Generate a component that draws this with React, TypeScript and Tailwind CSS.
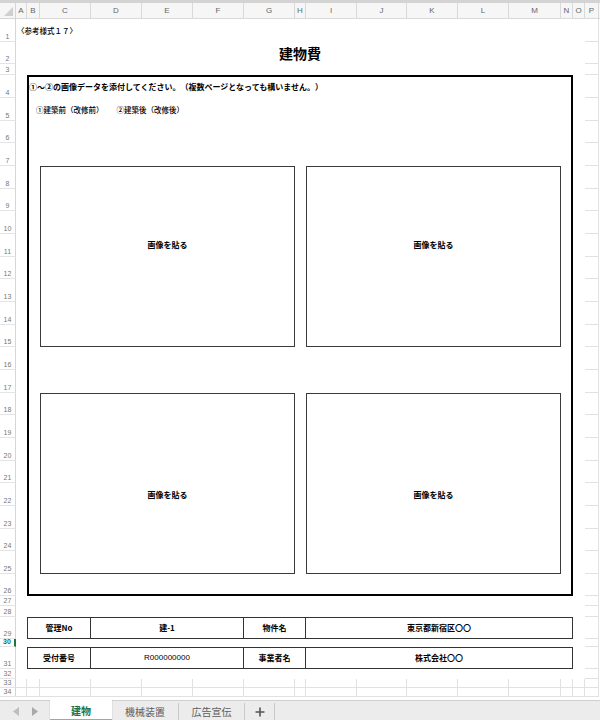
import React from "react";

const COLS = ["A", "B", "C", "D", "E", "F", "G", "H", "I", "J", "K", "L", "M", "N", "O", "P"];
const ROWS = Array.from({ length: 34 }, (_, i) => i + 1);
const ACTIVE_ROW = 30;

function Triangle({ dir, color }: { dir: "left" | "right"; color: string }) {
  return (
    <svg width="6" height="9" viewBox="0 0 6 9">
      {dir === "left" ? (
        <polygon points="6,0 6,9 0,4.5" fill={color} />
      ) : (
        <polygon points="0,0 0,9 6,4.5" fill={color} />
      )}
    </svg>
  );
}

function TabBar() {
  return (
    <div className="h-[23px] shrink-0 bg-[#ececec] border-t border-b border-[#cfcfcf] border-b-[#bdbdbd] flex items-stretch text-[10px]">
      <div className="w-[50px] flex items-center pl-[13px] gap-[13px]">
        <Triangle dir="left" color="#bdbdbd" />
        <Triangle dir="right" color="#a9a9a9" />
      </div>
      <div className="w-[62px] h-[19px] -mt-px self-start bg-white flex items-center justify-center pt-[2px] font-bold text-[#217346] shadow-[0_1px_1px_rgba(0,0,0,0.3)]">
        建物
      </div>
      <div className="w-[67px] h-[17px] self-center border-r border-[#c9c9c9] flex items-center justify-center text-[#5d5d5d]">
        機械装置
      </div>
      <div className="w-[66px] h-[17px] self-center border-r border-[#c9c9c9] flex items-center justify-center text-[#5d5d5d]">
        広告宣伝
      </div>
      <div className="w-[30px] h-[17px] self-center border-r border-[#c9c9c9] flex items-center justify-center">
        <svg width="10" height="10" viewBox="0 0 10 10">
          <path d="M5 0.5V9.5M0.5 5H9.5" stroke="#555" strokeWidth="1.6" />
        </svg>
      </div>
    </div>
  );
}

export default function App() {
  return (
    <div className="w-[600px] h-[720px] overflow-hidden bg-white flex flex-col font-['Noto_Sans_CJK_JP',sans-serif] text-black">
      <div className="h-[3px] shrink-0 bg-[#d3d3d3]" />
      <div className="h-[697px] shrink-0 overflow-hidden grid grid-cols-[16px_11px_13px_51px_51px_51px_51px_51px_11px_51px_50px_51px_51px_52px_12px_12px_14px_1fr] grid-rows-[16px_23px_22px_11px_23px_23px_22px_23px_repeat(18,22.667px)_22px_10px_11px_22px_8px_22px_10px_9px_9px]">
        {/* corner */}
        <div className="col-start-1 row-start-1 bg-[#f6f6f6] border-r border-b border-[#d6d6d6] flex items-end justify-end p-[2px]">
          <svg width="9" height="9" viewBox="0 0 9 9">
            <polygon points="9,0 9,9 0,9" fill="#cfcfcf" />
          </svg>
        </div>

        {/* column headers */}
        {COLS.map((c, i) => (
          <div
            key={c}
            style={{ gridColumn: i + 2, gridRow: 1 }}
            className="bg-[#f6f6f6] border-r border-b border-[#d9d9d9] flex items-center justify-center text-[8px] text-[#666] font-['Liberation_Sans',sans-serif]"
          >
            {c}
          </div>
        ))}
        <div className="col-start-18 row-start-1 bg-[#f6f6f6] border-b border-[#d9d9d9]" />

        {/* row headers */}
        {ROWS.map((r) => (
          <div
            key={r}
            style={{ gridColumn: 1, gridRow: r + 1 }}
            className={
              r === ACTIVE_ROW
                ? "border-b border-[#e4e4e4] border-r-2 border-r-[#217346] flex items-end justify-center pb-[1px] text-[7px] leading-none text-[#217346] font-bold font-['Liberation_Sans',sans-serif]"
                : "border-b border-[#e4e4e4] border-r border-r-[#d6d6d6] flex items-end justify-center pb-[1px] text-[7px] leading-none text-[#777] font-['Liberation_Sans',sans-serif]"
            }
          >
            {r}
          </div>
        ))}

        {/* gridlines outside the print area */}
        {ROWS.slice(0, 32).map((r) => (
          <div
            key={"p" + r}
            style={{ gridColumn: 17, gridRow: r + 1 }}
            className="border-b border-r border-[#e1e1e1]"
          />
        ))}
        {[33, 34].map((r) =>
          COLS.map((c, i) => (
            <div
              key={c + r}
              style={{ gridColumn: i + 2, gridRow: r + 1 }}
              className="border-b border-r border-[#e1e1e1]"
            />
          ))
        )}

        {/* row 1 */}
        <div className="col-start-2 col-end-9 row-start-2 flex items-center pl-px text-[7.5px] font-medium whitespace-nowrap [font-feature-settings:'fwid']">
          〈参考様式１７〉
        </div>

        {/* title */}
        <div className="col-start-3 col-end-16 row-start-3 flex items-center justify-center text-[14px] font-bold">
          建物費
        </div>

        {/* outer box */}
        <div className="col-start-3 col-end-16 row-start-5 row-end-28 border-2 border-black" />

        <div className="col-start-3 col-end-16 row-start-5 flex items-center pl-[2px] text-[8px] font-bold whitespace-nowrap [font-feature-settings:'fwid']">
          ①～②の画像データを添付してください。（複数ページとなっても構いません。）
        </div>
        <div className="col-start-3 col-end-16 row-start-6 flex items-center gap-[13px] pl-[9px] text-[7.5px] font-medium whitespace-nowrap [font-feature-settings:'fwid']">
          <span>①建築前（改修前）</span>
          <span>②建築後（改修後）</span>
        </div>

        {/* image boxes */}
        <div className="col-start-4 col-end-9 row-start-9 row-end-17 border-[1.5px] border-[#3a3a3a]" />
        <div className="col-start-10 col-end-15 row-start-9 row-end-17 border-[1.5px] border-[#3a3a3a]" />
        <div className="col-start-4 col-end-9 row-start-19 row-end-27 border-[1.5px] border-[#3a3a3a]" />
        <div className="col-start-10 col-end-15 row-start-19 row-end-27 border-[1.5px] border-[#3a3a3a]" />

        <div className="col-start-4 col-end-9 row-start-12 flex items-center justify-center text-[8px] font-semibold">画像を貼る</div>
        <div className="col-start-10 col-end-15 row-start-12 flex items-center justify-center text-[8px] font-semibold">画像を貼る</div>
        <div className="col-start-4 col-end-9 row-start-23 flex items-center justify-center text-[8px] font-semibold">画像を貼る</div>
        <div className="col-start-10 col-end-15 row-start-23 flex items-center justify-center text-[8px] font-semibold">画像を貼る</div>

        {/* info table row 29 */}
        <div className="col-start-3 col-end-5 row-start-30 border-[1.5px] border-[#333] flex items-center justify-center text-[8px] font-bold">管理No</div>
        <div className="col-start-5 col-end-8 row-start-30 border-y-[1.5px] border-r-[1.5px] border-[#333] flex items-center justify-center text-[8px] font-bold">建-1</div>
        <div className="col-start-8 col-end-10 row-start-30 border-y-[1.5px] border-r-[1.5px] border-[#333] flex items-center justify-center text-[8px] font-bold">物件名</div>
        <div className="col-start-10 col-end-16 row-start-30 border-y-[1.5px] border-r-[1.5px] border-[#333] flex items-center justify-center text-[8px] font-semibold">東京都新宿区〇〇</div>

        {/* info table row 31 */}
        <div className="col-start-3 col-end-5 row-start-32 border-[1.5px] border-[#333] flex items-center justify-center text-[8px] font-bold">受付番号</div>
        <div className="col-start-5 col-end-8 row-start-32 border-y-[1.5px] border-r-[1.5px] border-[#333] flex items-center justify-center text-[8px] font-['Liberation_Sans',sans-serif]">R000000000</div>
        <div className="col-start-8 col-end-10 row-start-32 border-y-[1.5px] border-r-[1.5px] border-[#333] flex items-center justify-center text-[8px] font-bold">事業者名</div>
        <div className="col-start-10 col-end-16 row-start-32 border-y-[1.5px] border-r-[1.5px] border-[#333] flex items-center justify-center text-[8px] font-semibold">株式会社〇〇</div>
      </div>
      <TabBar />
    </div>
  );
}
